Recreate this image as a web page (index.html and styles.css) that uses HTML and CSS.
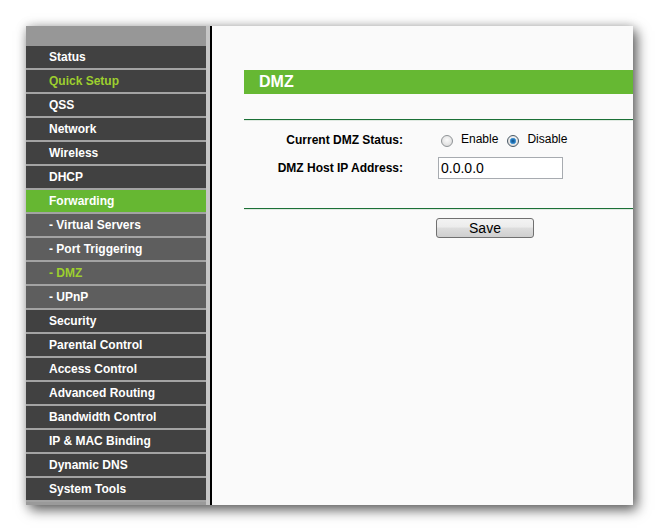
FILE: index.html
```html
<!DOCTYPE html>
<html>
<head>
<meta charset="utf-8">
<title>DMZ</title>
<link rel="stylesheet" href="styles.css">
</head>
<body>
<div class="window">
  <nav class="sidebar">
    <div class="side-head"></div>
    <ul class="menu">
      <li class="item">Status</li>
      <li class="item hl">Quick Setup</li>
      <li class="item">QSS</li>
      <li class="item">Network</li>
      <li class="item">Wireless</li>
      <li class="item">DHCP</li>
      <li class="item active">Forwarding</li>
      <li class="item sub">- Virtual Servers</li>
      <li class="item sub">- Port Triggering</li>
      <li class="item sub hl">- DMZ</li>
      <li class="item sub">- UPnP</li>
      <li class="item">Security</li>
      <li class="item">Parental Control</li>
      <li class="item">Access Control</li>
      <li class="item">Advanced Routing</li>
      <li class="item">Bandwidth Control</li>
      <li class="item">IP &amp; MAC Binding</li>
      <li class="item">Dynamic DNS</li>
      <li class="item">System Tools</li>
    </ul>
  </nav>
  <div class="strip"></div>
  <div class="divider"></div>
  <main class="content">
    <div class="title-bar">DMZ</div>
    <div class="rule rule-top"></div>
    <div class="form">
      <div class="row">
        <div class="label">Current DMZ Status:</div>
        <div class="value radios">
          <label class="opt"><input type="radio" name="dmz" class="radio"><span>Enable</span></label>
          <label class="opt"><input type="radio" name="dmz" class="radio" checked><span>Disable</span></label>
        </div>
      </div>
      <div class="row">
        <div class="label">DMZ Host IP Address:</div>
        <div class="value"><input type="text" class="textbox" value="0.0.0.0"></div>
      </div>
    </div>
    <div class="rule rule-bottom"></div>
    <div class="actions"><button class="btn">Save</button></div>
  </main>
</div>
</body>
</html>
```
FILE: styles.css
```css
html, body {
  margin: 0;
  padding: 0;
  background: #ffffff;
}
body {
  font-family: "Liberation Sans", Arial, sans-serif;
  padding: 26px 0 0 26px;
  width: 659px;
  height: 531px;
  box-sizing: border-box;
  overflow: hidden;
}
.window {
  display: flex;
  width: 607px;
  height: 479px;
  box-shadow: 4px 5px 12px rgba(0, 0, 0, 0.6), 0 0 10px rgba(0, 0, 0, 0.18);
  background: #fafafa;
}
.sidebar {
  width: 180px;
  flex: none;
  background: #9a9a9a;
  display: flex;
  flex-direction: column;
}
.side-head {
  height: 20px;
  background: #979797;
}
.menu {
  list-style: none;
  margin: 0;
  padding: 0;
}
.item {
  height: 22px;
  line-height: 22px;
  border-bottom: 2px solid #a3a3a3;
  background: #414141;
  color: #ffffff;
  font-size: 12px;
  font-weight: bold;
  padding-left: 23px;
  white-space: nowrap;
}
.item.sub {
  background: #5e5e5e;
}
.item.active {
  background: #66b732;
}
.item.hl {
  color: #9dcf2e;
}
.strip {
  width: 4px;
  flex: none;
  background: #c6c6c6;
}
.divider {
  width: 2px;
  flex: none;
  background: #000000;
}
.content {
  flex: 1;
  overflow: hidden;
  padding: 44px 0 0 32px;
  background: #fafafa;
}
.title-bar {
  height: 24px;
  line-height: 24px;
  background: #66b833;
  color: #ffffff;
  font-size: 16px;
  font-weight: bold;
  padding-left: 15px;
}
.rule {
  height: 1px;
  background: #1b7036;
  border-bottom: 1px solid #dfe9e1;
}
.rule-top {
  margin-top: 25px;
}
.rule-bottom {
  margin-top: 26px;
}
.form {
  margin-top: 5px;
}
.row {
  display: grid;
  grid-template-columns: 159px 1fr;
  column-gap: 35px;
  height: 28px;
  align-items: center;
}
.label {
  text-align: right;
  font-size: 12px;
  font-weight: bold;
  color: #000;
}
.value {
  display: flex;
  align-items: center;
  font-size: 12px;
  color: #000;
}
.opt {
  display: flex;
  align-items: center;
  margin-left: 3px;
  margin-right: 6px;
}
.opt span {
  margin-top: -3px;
}
.radio {
  appearance: none;
  -webkit-appearance: none;
  width: 12px;
  height: 12px;
  margin: 2px 8px 0 0;
  border-radius: 50%;
  border: 1px solid #8f9396;
  box-sizing: border-box;
  background: radial-gradient(circle at 50% 40%, #fafafa 0%, #e6e6e6 55%, #cfcfcf 100%);
}
.radio:checked {
  background:
    radial-gradient(circle at 50% 50%, #0d4f86 0%, #2a7bbf 30%, #6fb6e6 45%, rgba(255,255,255,0) 50%),
    radial-gradient(circle at 50% 40%, #fafafa 0%, #e6e6e6 55%, #cfcfcf 100%);
  border-color: #4b5a66;
}
.textbox {
  width: 125px;
  height: 22px;
  box-sizing: border-box;
  border: 1px solid #a7abb0;
  background: #ffffff;
  font-family: "Liberation Sans", Arial, sans-serif;
  font-size: 14px;
  color: #000;
  padding: 0 2px;
  margin: 0;
}
.actions {
  padding: 8px 0 0 192px;
}
.btn {
  width: 98px;
  height: 20px;
  padding: 0;
  border: 1px solid #707070;
  border-radius: 3px;
  background: linear-gradient(#f3f3f3 0%, #ececec 45%, #dddddd 50%, #cfcfcf 100%);
  font-family: "Liberation Sans", Arial, sans-serif;
  font-size: 14px;
  color: #000;
  line-height: 18px;
}
```
